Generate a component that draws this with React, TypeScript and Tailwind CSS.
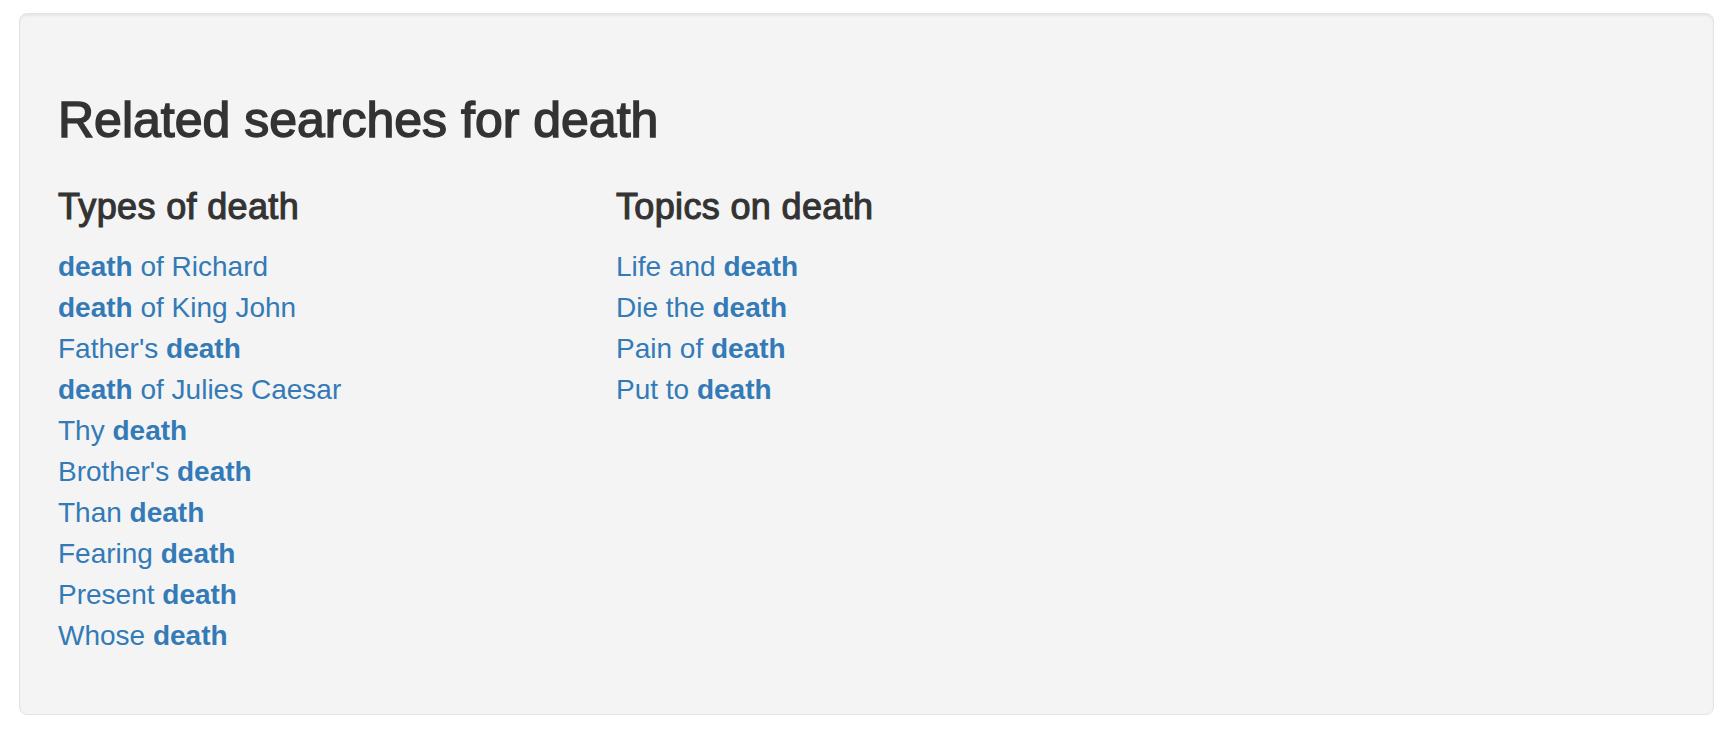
import React from "react";

const types: [string, string, boolean][] = [
  ["death", " of Richard", true],
  ["death", " of King John", true],
  ["Father's ", "death", false],
  ["death", " of Julies Caesar", true],
  ["Thy ", "death", false],
  ["Brother's ", "death", false],
  ["Than ", "death", false],
  ["Fearing ", "death", false],
  ["Present ", "death", false],
  ["Whose ", "death", false],
];

const topics: [string, string, boolean][] = [
  ["Life and ", "death", false],
  ["Die the ", "death", false],
  ["Pain of ", "death", false],
  ["Put to ", "death", false],
];

function LinkRow({ a, b, boldFirst }: { a: string; b: string; boldFirst: boolean }) {
  return (
    <li>
      <a href="#" className="text-[#337ab7] no-underline">
        {boldFirst ? (
          <>
            <b className="font-bold">{a}</b>
            {b}
          </>
        ) : (
          <>
            {a}
            <b className="font-bold">{b}</b>
          </>
        )}
      </a>
    </li>
  );
}

function Column({ title, items, width }: { title: string; items: [string, string, boolean][]; width?: string }) {
  return (
    <div className={width}>
      <h4 className="text-[36px] leading-[40px] tracking-[0.35px] text-[#333333] font-normal [-webkit-text-stroke:1.1px_#333333]">
        {title}
      </h4>
      <ul className="mt-[19px] text-[28px] leading-[41px] list-none">
        {items.map(([a, b, f], i) => (
          <LinkRow key={i} a={a} b={b} boldFirst={f} />
        ))}
      </ul>
    </div>
  );
}

export default function App() {
  return (
    <div className="min-h-screen w-full bg-white pt-[13px] pl-[19px] font-['Liberation_Sans',Arial,sans-serif]">
      <div className="w-[1695px] h-[702px] rounded-[8px] border border-[#e3e3e3] bg-[#f4f4f4] shadow-[inset_0_2px_2px_rgba(0,0,0,0.05)] pl-[38px] pt-[80px]">
        <h2 className="text-[50px] leading-[53px] text-[#333333] font-normal [-webkit-text-stroke:1.5px_#333333]">
          Related searches for death
        </h2>
        <div className="flex mt-[40px]">
          <Column title="Types of death" items={types} width="w-[558px]" />
          <Column title="Topics on death" items={topics} />
        </div>
      </div>
    </div>
  );
}
